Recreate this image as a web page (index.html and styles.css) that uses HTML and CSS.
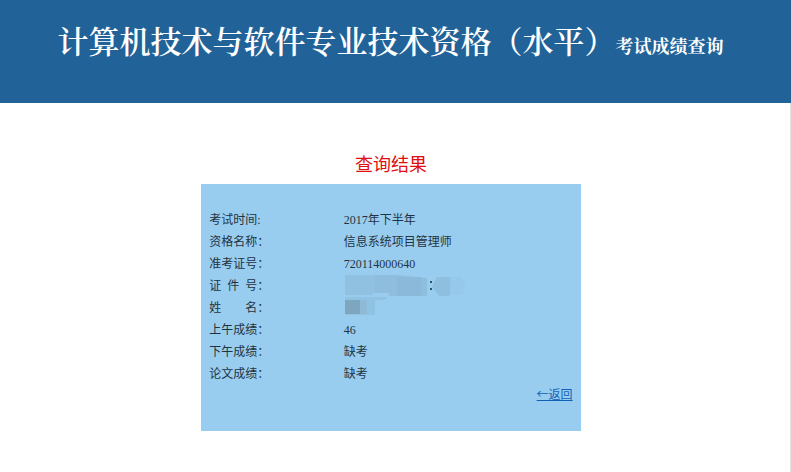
FILE: index.html
```html
<!DOCTYPE html>
<html lang="zh-CN">
<head>
<meta charset="utf-8">
<title>考试成绩查询</title>
<link rel="stylesheet" href="styles.css">
</head>
<body>
<header class="banner">
  <h1 class="banner-title">计算机技术与软件专业技术资格（水平）</h1>
  <span class="banner-sub">考试成绩查询</span>
</header>
<main class="content">
  <h2 class="heading">查询结果</h2>
  <section class="panel">
    <table class="result">
      <tr><th scope="row">考试时间:</th><td>2017年下半年</td></tr>
      <tr><th scope="row">资格名称：</th><td>信息系统项目管理师</td></tr>
      <tr><th scope="row">准考证号：</th><td>720114000640</td></tr>
      <tr><th scope="row">证&ensp;件&ensp;号：</th><td>
        <svg class="mask" width="124" height="22" viewBox="0 0 124 22" aria-hidden="true">
          <path fill="#90c1e0" d="M1 0H31L45 1V18H29V20H1z"/>
          <path fill="#8fbddd" d="M31 0H53L83 3V21H45V18H31z"/>
          <path fill="#8ab9da" d="M53 2H77V21H53z"/>
          <path fill="#8fbfdf" d="M93 2H106V21H95L88 12z"/>
          <path fill="#95c8ea" d="M106 2H117L121 8V16L117 20H106z"/>
          <path fill="#265b65" d="M86 6h2v2h-2zM86 13h2v2h-2z"/>
        </svg></td></tr>
      <tr><th scope="row">姓&ensp;&ensp;&ensp;&ensp;名：</th><td>
        <svg class="mask" width="124" height="22" viewBox="0 0 124 22" aria-hidden="true">
          <path fill="#90c2e2" d="M1 0H43L41 3H31V18H1z"/>
          <path fill="#7ea6bf" d="M1 3H16V17H1z"/>
          <path fill="#8fbad7" d="M16 3H23V17H16z"/>
        </svg></td></tr>
      <tr><th scope="row">上午成绩：</th><td>46</td></tr>
      <tr><th scope="row">下午成绩：</th><td>缺考</td></tr>
      <tr><th scope="row">论文成绩：</th><td>缺考</td></tr>
    </table>
    <a class="back" href="#">←返回</a>
  </section>
</main>
</body>
</html>
```
FILE: styles.css
```css
* {
  box-sizing: border-box;
}

body {
  margin: 0;
  min-height: 100vh;
  display: flex;
  flex-direction: column;
  background: #fff;
  color: #1f3442;
  font-family: "Liberation Serif", "Noto Sans CJK SC", serif;
  font-size: 12px;
  line-height: 22px;
}

.banner {
  display: flex;
  justify-content: center;
  align-items: baseline;
  padding: 18px 10px 41px 0;
  background: #216398;
  color: #fff;
  font-family: "Noto Serif CJK SC", "Noto Sans CJK SC", serif;
  white-space: nowrap;
}

.banner-title {
  margin: 0;
  font-size: 31px;
  font-weight: 600;
  line-height: 44px;
}

.banner-sub {
  font-size: 18px;
  font-weight: 700;
}

.content {
  flex: 1;
  padding: 50px 8px 40px 0;
  border-right: 1px solid #e4e4e4;
}

.heading {
  margin: 0 0 7px;
  color: #e01010;
  font-size: 18px;
  font-weight: 400;
  line-height: 24px;
  text-align: center;
}

.panel {
  display: flex;
  flex-direction: column;
  width: 48.5%;
  min-width: 320px;
  margin: 0 auto;
  padding: 25px 8px 28px;
  background: #99cdef;
}

.result {
  width: 100%;
  border-collapse: collapse;
}

.result th,
.result td {
  height: 22px;
  padding: 0;
  font-weight: 400;
  text-align: left;
}

.result th {
  width: 37%;
}

.mask {
  display: block;
}

.back {
  align-self: flex-end;
  color: #0f62b4;
  font-family: "Noto Sans CJK SC", sans-serif;
  line-height: 18px;
}
```
